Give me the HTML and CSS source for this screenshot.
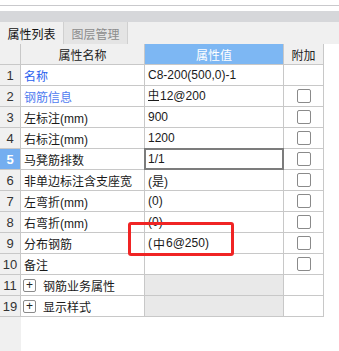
FILE: index.html
```html
<!DOCTYPE html>
<html>
<head>
<meta charset="utf-8">
<link rel="stylesheet" href="styles.css">
</head>
<body>
<div class="top">
  <div class="top-white"></div>
  <div class="top-band"></div>
  <div class="tabbar">
    <div class="tab active">属性列表</div>
    <div class="tab">图层管理</div>
  </div>
</div>
<div class="panel">
  <div class="grid">
    <div class="c num hdr-corner"></div>
    <div class="c hdr">属性名称</div>
    <div class="c hdr hdr-sel">属性值</div>
    <div class="c hdr">附加</div>
    <div class="c fill hdr-fill"></div>

    <div class="c num">1</div>
    <div class="c name blue">名称</div>
    <div class="c val">C8-200(500,0)-1</div>
    <div class="c add"></div>
    <div class="c fill"></div>

    <div class="c num">2</div>
    <div class="c name blue2">钢筋信息</div>
    <div class="c val"><span class="grade">中</span>12@200</div>
    <div class="c add"><span class="cb"></span></div>
    <div class="c fill"></div>

    <div class="c num">3</div>
    <div class="c name">左标注(mm)</div>
    <div class="c val">900</div>
    <div class="c add"><span class="cb"></span></div>
    <div class="c fill"></div>

    <div class="c num">4</div>
    <div class="c name">右标注(mm)</div>
    <div class="c val">1200</div>
    <div class="c add"><span class="cb"></span></div>
    <div class="c fill"></div>

    <div class="c num num-sel">5</div>
    <div class="c name">马凳筋排数</div>
    <div class="c val val-sel">1/1</div>
    <div class="c add"><span class="cb"></span></div>
    <div class="c fill"></div>

    <div class="c num">6</div>
    <div class="c name">非单边标注含支座宽</div>
    <div class="c val">(是)</div>
    <div class="c add"><span class="cb"></span></div>
    <div class="c fill"></div>

    <div class="c num">7</div>
    <div class="c name">左弯折(mm)</div>
    <div class="c val">(0)</div>
    <div class="c add"><span class="cb"></span></div>
    <div class="c fill"></div>

    <div class="c num">8</div>
    <div class="c name">右弯折(mm)</div>
    <div class="c val">(0)</div>
    <div class="c add"><span class="cb"></span></div>
    <div class="c fill"></div>

    <div class="c num">9</div>
    <div class="c name">分布钢筋</div>
    <div class="c val">(<span class="grade1">中</span>6@250)</div>
    <div class="c add"><span class="cb"></span></div>
    <div class="c fill"></div>

    <div class="c num">10</div>
    <div class="c name">备注</div>
    <div class="c val"></div>
    <div class="c add"><span class="cb"></span></div>
    <div class="c fill"></div>

    <div class="c num">11</div>
    <div class="c name"><span class="plus">+</span>钢筋业务属性</div>
    <div class="c val group"></div>
    <div class="c add"></div>
    <div class="c fill"></div>

    <div class="c num">19</div>
    <div class="c name"><span class="plus">+</span>显示样式</div>
    <div class="c val group"></div>
    <div class="c add"></div>
    <div class="c fill"></div>
  </div>
  <div class="rest">
    <div class="rest-num"></div>
  </div>
  <div class="redbox"></div>
</div>
</body>
</html>
```

FILE: styles.css
```css
html, body {
  margin: 0;
  padding: 0;
  width: 339px;
  height: 351px;
  overflow: hidden;
  background: #ffffff;
  font-family: "Liberation Sans", "Noto Sans CJK SC", sans-serif;
  font-size: 12px;
  color: #1a1a1a;
}

.top-white {
  height: 5px;
  border-bottom: 1px solid #c9c9cc;
  margin-bottom: 5px;
}

.top-band {
  height: 11px;
  background: #d6d7da;
}

.tabbar {
  display: flex;
  height: 22px;
  background: #f0f0f0;
}

.tab {
  width: 63px;
  border-right: 1px solid #d0d0d0;
  display: flex;
  align-items: center;
  justify-content: center;
  font-size: 12px;
  color: #8c8c8c;
  background: #e4e4e4;
}

.tab.active {
  color: #111111;
  background: #f0f0f0;
}

.panel {
  position: relative;
}

.grid {
  display: grid;
  grid-template-columns: 21px 124px 139px 40px 15px;
  grid-auto-rows: 21px;
}

.c {
  box-sizing: border-box;
  border-right: 1px solid #c8c8c8;
  border-bottom: 1px solid #c8c8c8;
  display: flex;
  align-items: center;
  white-space: nowrap;
  overflow: visible;
}

.grid > .c:nth-child(-n+5) {
  height: 21px;
}

.hdr {
  justify-content: center;
  background: #f0f0f0;
  color: #222222;
}

.hdr-sel {
  background: #7db7f3;
  color: #ffffff;
}

.hdr-corner {
  background: #ffffff;
}

.hdr-fill {
  background: #f4f4f4;
}

.num {
  justify-content: center;
  background: #f0f0f0;
  color: #333333;
  font-size: 13px;
}

.num-sel {
  background: #74aef0;
  color: #ffffff;
  font-weight: bold;
}

.name {
  padding-left: 3px;
  background: #ffffff;
}

.blue {
  color: #2a62ee;
}

.blue2 {
  color: #4f7cf0;
}

.val {
  padding-left: 3px;
  background: #ffffff;
  position: relative;
}

.val-sel::after {
  content: "";
  position: absolute;
  left: -1px;
  top: -1px;
  right: -1px;
  bottom: -1px;
  border: 2px solid #7c7c7c;
}

.grade {
  display: inline-block;
  font-size: 11px;
  line-height: 10px;
  border-bottom: 1px solid #1a1a1a;
  margin-right: 1px;
  margin-top: -2px;
}

.grade1 {
  font-size: 12px;
  margin: 0 1px;
}

.group {
  background: #e9e9e9;
}

.add {
  justify-content: center;
  background: #ffffff;
}

.fill {
  border-right: none;
  border-bottom: none;
  background: #ffffff;
}

.cb {
  box-sizing: border-box;
  width: 14px;
  height: 14px;
  border: 1px solid #8a8a8a;
  border-radius: 2px;
  background: #ffffff;
}

.plus {
  box-sizing: border-box;
  width: 13px;
  height: 13px;
  border: 1px solid #8a8a8a;
  border-radius: 2px;
  display: inline-flex;
  align-items: center;
  justify-content: center;
  font-size: 12px;
  line-height: 1;
  color: #222222;
  margin-left: -1px;
  margin-right: 7px;
}

.rest {
  display: flex;
  height: 40px;
}

.rest-num {
  width: 21px;
  background: #f0f0f0;
}

.redbox {
  position: absolute;
  left: 128px;
  top: 178px;
  width: 106px;
  height: 34px;
  box-sizing: border-box;
  border: 3px solid #f02424;
  border-radius: 3px;
}
```
